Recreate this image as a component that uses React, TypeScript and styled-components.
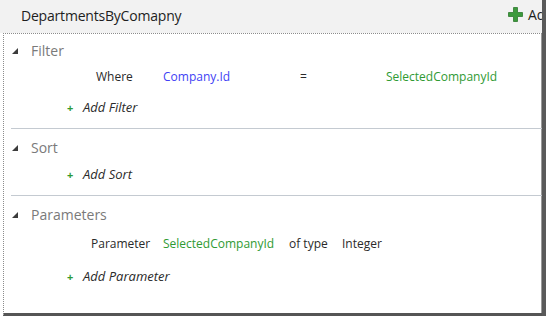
import React from 'react'
import styled, { createGlobalStyle } from 'styled-components'

const GlobalStyle = createGlobalStyle`
  html, body {
    margin: 0;
    padding: 0;
    background: #ffffff;
  }
  body {
    font-family: 'Open Sans', 'Noto Sans', sans-serif;
  }
`

const BLUE = '#4141f5'
const GREEN = '#2f9a33'

const Window = styled.div`
  width: 546px;
  height: 316px;
  box-sizing: border-box;
  display: flex;
  flex-direction: column;
  overflow: hidden;
  background: #ffffff;
  border-right: 4px solid #5a5a5a;
  box-shadow: inset -1px 0 0 #9a9a9a;
`

const TitleBar = styled.div`
  height: 33px;
  flex: 0 0 33px;
  display: flex;
  align-items: center;
  justify-content: space-between;
  background: #f2f2f2;
  padding-left: 21px;
  box-sizing: border-box;
  white-space: nowrap;
`

const Title = styled.span`
  font-size: 14px;
  color: #1e1e1e;
  letter-spacing: -0.2px;
  margin-top: -3px;
`

const AddButton = styled.span`
  display: flex;
  align-items: center;
  gap: 5px;
  font-size: 14px;
  color: #1e1e1e;
  margin-right: -12px;
  margin-top: -4px;
`

const Panel = styled.div`
  flex: 1;
  margin-left: 3px;
  border-top: 1px dotted #8c8c8c;
  border-left: 1px dotted #8c8c8c;
  border-bottom: 3px solid #555555;
  display: flex;
  flex-direction: column;
`

const Section = styled.div<{ $top: number; $last?: boolean }>`
  padding: ${(p) => p.$top}px 0 ${(p) => (p.$last ? 0 : 10)}px 0;
  margin-left: 7px;
  border-bottom: ${(p) => (p.$last ? 'none' : '1px solid #c4cad1')};
`

const SectionHeader = styled.div`
  height: 22px;
  display: flex;
  align-items: center;
  margin-left: -7px;
  padding-left: 8px;
`

const Caret = styled.span`
  width: 0;
  height: 0;
  border-left: 6px solid transparent;
  border-bottom: 6px solid #3c3c3c;
  margin-right: 13px;
  margin-top: 1px;
`

const HeaderText = styled.span`
  font-size: 14px;
  color: #7a7a7a;
`

const Clause = styled.div<{ $gap: number; $indent: number }>`
  height: 22px;
  margin-top: ${(p) => p.$gap}px;
  padding-left: ${(p) => p.$indent}px;
  display: flex;
  align-items: center;
  font-size: 12px;
  white-space: nowrap;
`

const Cell = styled.span<{ $w?: number; $color?: string }>`
  ${(p) => (p.$w ? `width: ${p.$w}px; flex: 0 0 ${p.$w}px;` : '')}
  color: ${(p) => p.$color || '#2a2a2a'};
`

const AddRow = styled.div<{ $gap: number }>`
  height: 22px;
  margin-top: ${(p) => p.$gap}px;
  padding-left: 56px;
  display: flex;
  align-items: center;
  font-size: 13px;
  font-style: italic;
  color: #2a2a2a;
`

const SmallPlus = styled.span`
  color: ${GREEN};
  font-style: normal;
  font-weight: 700;
  font-size: 11px;
  width: 16px;
`

const BigPlus = () => (
  <svg width="15" height="15" viewBox="0 0 15 15">
    <path
      d="M5.5 0.5h4v5h5v4h-5v5h-4v-5h-5v-4h5z"
      fill="#3c9a3c"
      stroke="#2d7a2d"
      strokeWidth="0.8"
    />
  </svg>
)

export default function App() {
  return (
    <>
      <GlobalStyle />
      <Window>
        <TitleBar>
          <Title>DepartmentsByComapny</Title>
          <AddButton>
            <BigPlus />
            Add
          </AddButton>
        </TitleBar>
        <Panel>
          <Section $top={5}>
            <SectionHeader>
              <Caret />
              <HeaderText>Filter</HeaderText>
            </SectionHeader>
            <Clause $gap={4} $indent={85}>
              <Cell $w={67}>Where</Cell>
              <Cell $w={137} $color={BLUE}>Company.Id</Cell>
              <Cell $w={86}>=</Cell>
              <Cell $color={GREEN}>SelectedCompanyId</Cell>
            </Clause>
            <AddRow $gap={9}>
              <SmallPlus>+</SmallPlus>
              Add Filter
            </AddRow>
          </Section>
          <Section $top={7}>
            <SectionHeader>
              <Caret />
              <HeaderText>Sort</HeaderText>
            </SectionHeader>
            <AddRow $gap={5}>
              <SmallPlus>+</SmallPlus>
              Add Sort
            </AddRow>
          </Section>
          <Section $top={7} $last>
            <SectionHeader>
              <Caret />
              <HeaderText>Parameters</HeaderText>
            </SectionHeader>
            <Clause $gap={7} $indent={80}>
              <Cell $w={72}>Parameter</Cell>
              <Cell $w={126} $color={GREEN}>SelectedCompanyId</Cell>
              <Cell $w={53}>of type</Cell>
              <Cell>Integer</Cell>
            </Clause>
            <AddRow $gap={11}>
              <SmallPlus>+</SmallPlus>
              Add Parameter
            </AddRow>
          </Section>
        </Panel>
      </Window>
    </>
  )
}
